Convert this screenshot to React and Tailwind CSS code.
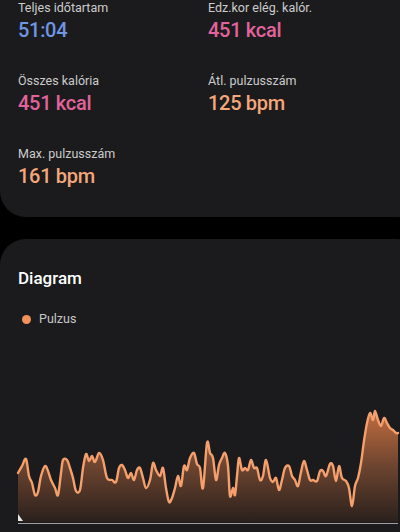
const pts = [
  [18, 475], [22, 468], [26, 461], [29, 478], [32, 485], [35, 497], [38, 494], [41, 478],
  [45, 468], [48, 473], [51, 482], [55, 490], [58, 497], [61, 475], [63, 462], [67, 462],
  [70, 470], [73, 480], [76, 493], [80, 492], [83, 470], [86, 456], [89, 463], [92, 458],
  [95, 464], [99, 455], [103, 462], [107, 480], [112, 482], [116, 484], [119, 470], [122, 467],
  [125, 472], [128, 480], [131, 475], [134, 482], [137, 472], [140, 470], [143, 480], [146, 490],
  [150, 482], [153, 465], [156, 472], [160, 478], [163, 470], [166, 490], [169, 504], [172, 500],
  [175, 490], [178, 478], [181, 488], [184, 468], [187, 472], [190, 460], [194, 455], [197, 466],
  [200, 470], [203, 490], [207, 445], [210, 455], [213, 460], [216, 482], [219, 467], [222, 460],
  [225, 455], [228, 468], [230, 498], [233, 490], [235, 497], [237, 478], [239, 460], [242, 472],
  [245, 470], [248, 472], [251, 462], [254, 470], [257, 470], [260, 482], [263, 478], [266, 462],
  [270, 480], [273, 484], [276, 480], [279, 492], [282, 482], [285, 470], [289, 468], [292, 478],
  [295, 482], [298, 488], [301, 474], [304, 463], [307, 472], [310, 482], [313, 482], [317, 483],
  [320, 473], [323, 473], [326, 478], [330, 466], [333, 468], [336, 483], [339, 468], [342, 480],
  [346, 483], [349, 490], [352, 508], [355, 488], [358, 480], [361, 465], [364, 443], [367, 425],
  [370, 415], [373, 422], [375, 413], [378, 422], [381, 428], [384, 420], [387, 425], [390, 430],
  [393, 432], [396, 435], [398, 435],
];

// smooth curve through the points (catmull-rom -> bezier)
const smooth = (p) => {
  let d = `M${p[0][0]},${p[0][1]}`;
  for (let i = 0; i < p.length - 1; i++) {
    const p0 = p[i - 1] || p[i];
    const p1 = p[i];
    const p2 = p[i + 1];
    const p3 = p[i + 2] || p2;
    const c1x = p1[0] + (p2[0] - p0[0]) / 6;
    const c1y = p1[1] + (p2[1] - p0[1]) / 6;
    const c2x = p2[0] - (p3[0] - p1[0]) / 6;
    const c2y = p2[1] - (p3[1] - p1[1]) / 6;
    d += ` C${c1x.toFixed(1)},${c1y.toFixed(1)} ${c2x.toFixed(1)},${c2y.toFixed(1)} ${p2[0]},${p2[1]}`;
  }
  return d;
};

const linePath = smooth(pts);
const areaPath = `${linePath} L398,524 L18,524 Z`;

const stats = [
  { label: "Teljes időtartam", value: "51:04", color: "text-[#6f95e4]" },
  { label: "Edz.kor elég. kalór.", value: "451 kcal", color: "text-[#e2639c]" },
  { label: "Összes kalória", value: "451 kcal", color: "text-[#e2639c]" },
  { label: "Átl. pulzusszám", value: "125 bpm", color: "text-[#f4a77a]" },
  { label: "Max. pulzusszám", value: "161 bpm", color: "text-[#f4a77a]" },
];

const Stat = ({ label, value, color }) => (
  <div className="flex flex-col">
    <span className="text-[12.5px] leading-[16px] text-[#cbcbcb]">{label}</span>
    <span className={`text-[20px] leading-[28px] font-medium tracking-[-0.3px] ${color}`}>
      {value}
    </span>
  </div>
);

export default function App() {
  return (
    <div
      className="w-[400px] h-[532px] overflow-hidden bg-black flex flex-col"
      style={{ fontFamily: "Roboto, 'Noto Sans', sans-serif" }}
    >
      <div className="mr-[-22px] bg-[#1b1b1d] rounded-b-[26px] px-[18px] pb-[27px]">
        <div className="grid grid-cols-[190px_1fr] gap-y-[29px]">
          {stats.map((s, i) => (
            <Stat key={i} {...s} />
          ))}
        </div>
      </div>

      <div className="mt-[22px] mr-[-22px] flex-1 bg-[#1b1b1d] rounded-t-[26px] pt-[27px]">
        <h2 className="px-[18px] text-[17px] leading-[24px] font-medium text-white">Diagram</h2>
        <div className="mt-[20px] px-[22px] flex items-center gap-[8px] h-[18px]">
          <span className="w-[9px] h-[9px] rounded-full bg-[#f0925c]" />
          <span className="text-[12.5px] text-[#c8c8c8]">Pulzus</span>
        </div>
        <svg className="mt-[10px] block" width="400" height="192" viewBox="0 340 400 192">
          <defs>
            <linearGradient id="fillg" x1="0" y1="410" x2="0" y2="524" gradientUnits="userSpaceOnUse">
              <stop offset="0" stopColor="#c86f40" />
              <stop offset="0.5" stopColor="#6e4530" />
              <stop offset="1" stopColor="#2a201c" />
            </linearGradient>
          </defs>
          <path d={areaPath} fill="url(#fillg)" />
          <path
            d={linePath}
            fill="none"
            stroke="#f5a06c"
            strokeWidth="2.4"
            strokeLinejoin="round"
            strokeLinecap="round"
          />
          <line x1="18" y1="525.5" x2="398" y2="525.5" stroke="#a0a0a0" strokeWidth="1" />
          <polygon points="18,516 18,523 23,523" fill="#e8e8e8" />
        </svg>
      </div>
    </div>
  );
}
